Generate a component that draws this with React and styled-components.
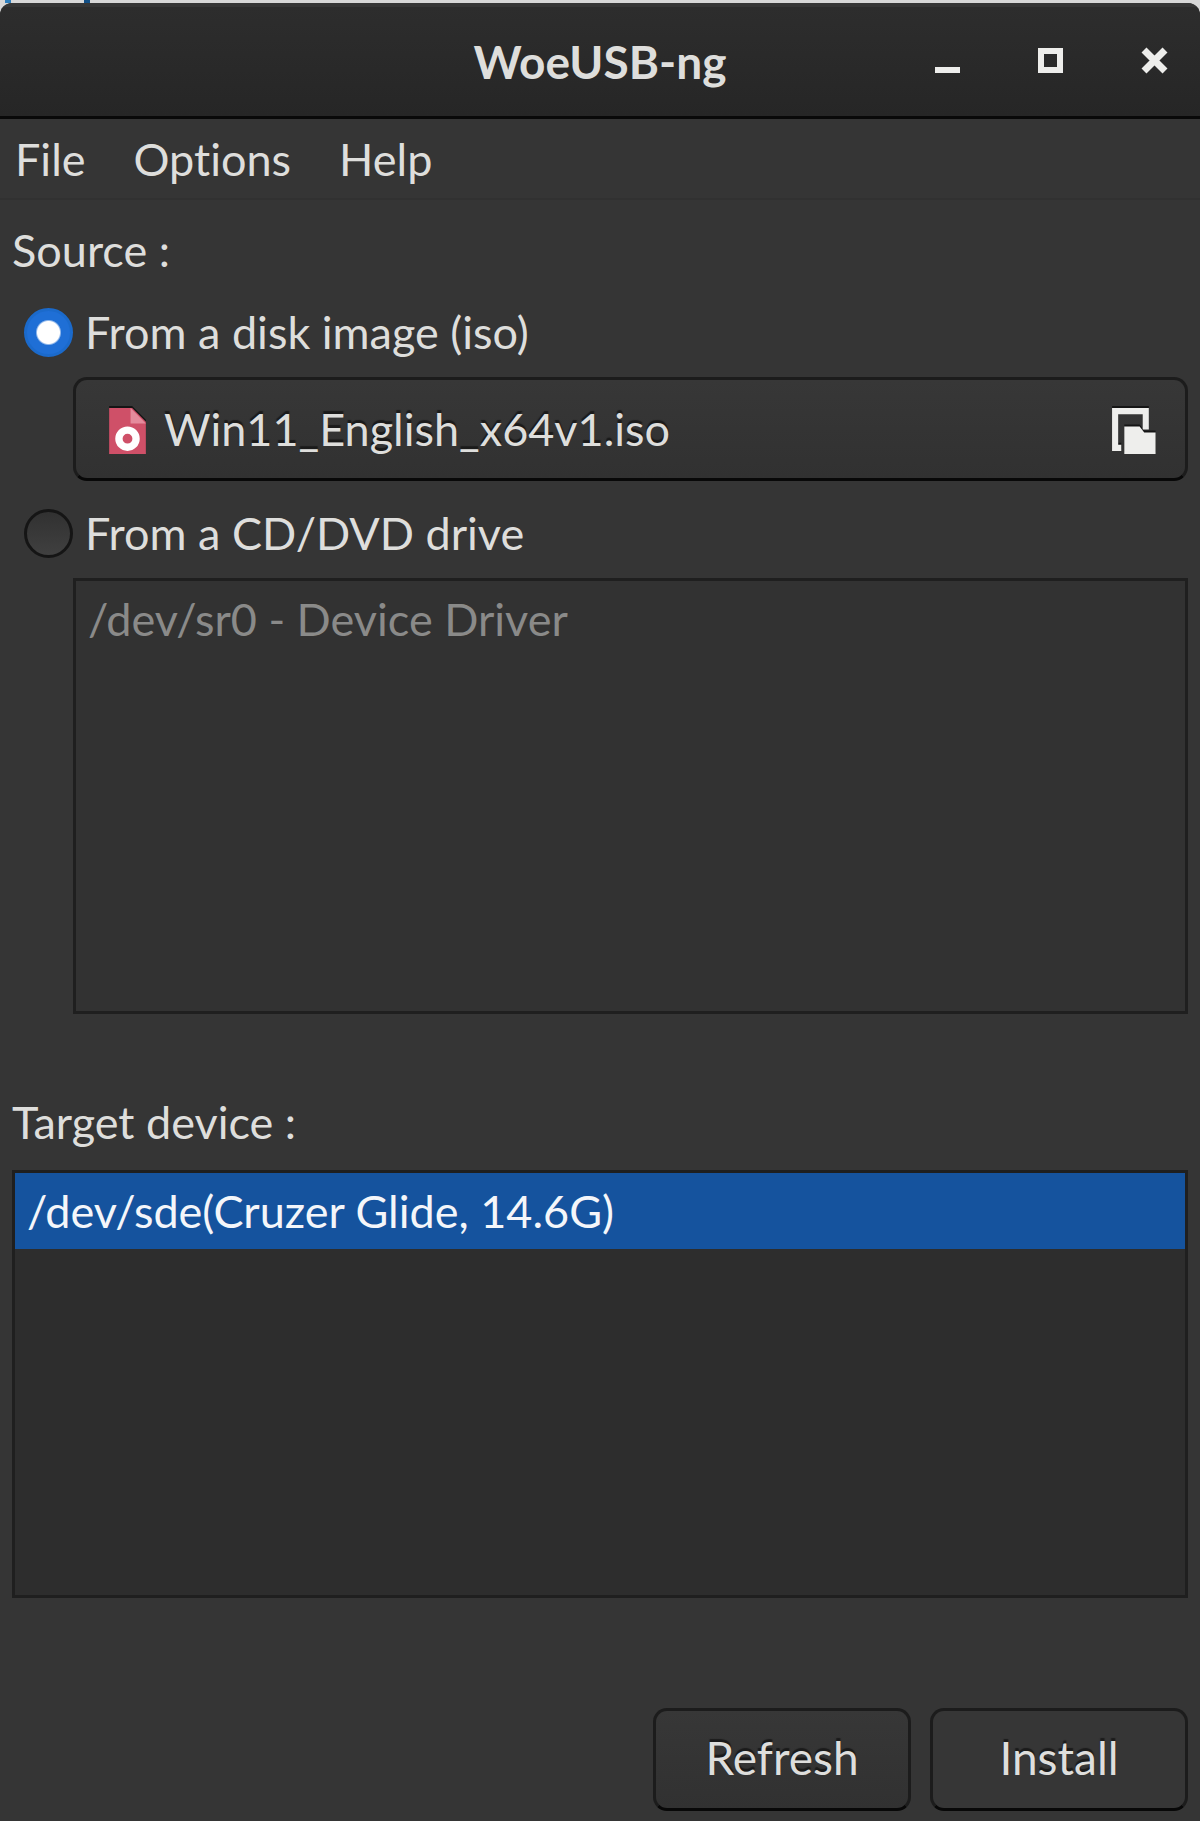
import React, { useState } from "react";
import styled, { createGlobalStyle } from "styled-components";

const GlobalStyle = createGlobalStyle`
  *, *::before, *::after {
    box-sizing: border-box;
  }

  body {
    margin: 0;
    background: #d8d8d8;
    color: #dededc;
    font-family: Lato, "Noto Sans", sans-serif;
    font-size: 45px;
    font-variant-ligatures: none;
    line-height: 56px;
  }

  button, input {
    font: inherit;
    color: inherit;
  }
`;

const Page = styled.div`
  display: flex;
  flex-direction: column;
  min-height: 100vh;
`;

const Desktop = styled.div`
  display: flex;
  gap: 73px;
  height: 3px;
  padding-left: 5px;
`;

const DesktopMark = styled.span`
  width: 6px;
  background: ${(props) => props.$color};
`;

const Window = styled.div`
  flex: 1;
  display: flex;
  flex-direction: column;
  background: #353535;
  border-radius: 12px 12px 0 0;
  overflow: hidden;
`;

const TitleBar = styled.header`
  display: grid;
  grid-template-columns: 1fr auto 1fr;
  align-items: center;
  height: 116px;
  border-top: 4px solid #363636;
  border-bottom: 3px solid #090909;
  background: linear-gradient(#2d2d2d, #262626);
`;

const Title = styled.h1`
  grid-column: 2;
  margin: 0;
  font-size: 46px;
  font-weight: 700;
`;

const WindowButtons = styled.div`
  display: flex;
  justify-content: flex-end;
  gap: 54px;
  padding-right: 21px;
`;

const WindowButton = styled.button`
  display: flex;
  padding: 0;
  border: 0;
  background: none;
  color: #ededeb;
`;

const MenuBar = styled.nav`
  display: flex;
  gap: 48px;
  padding: 12px 15px 11px;
  border-bottom: 2px solid #313131;
`;

const MenuItem = styled.button`
  padding: 0;
  border: 0;
  background: none;
  font-variant-ligatures: none;
`;

const Content = styled.main`
  flex: 1;
  display: flex;
  flex-direction: column;
  padding: 22px 12px 10px;
`;

const SectionLabel = styled.h2`
  margin: 0;
  font-size: 45px;
  font-weight: 400;
`;

const SourceGroup = styled.div`
  flex: 1 1 auto;
  display: flex;
  flex-direction: column;
  gap: 24px;
  margin: 26px 0 80px;
`;

const SourceOption = styled.div`
  flex: ${(props) => (props.$grow ? "1 1 auto" : "none")};
  display: flex;
  flex-direction: column;
  gap: 17px;
`;

const RadioLabel = styled.label`
  display: flex;
  align-items: center;
  gap: 12px;
  padding-left: 12px;
`;

const Radio = styled.input`
  appearance: none;
  width: 49px;
  height: 49px;
  margin: 0;
  border: 3px solid #151515;
  border-radius: 50%;
  background: linear-gradient(#313131, #404040);

  &:checked {
    border-color: #1b6acb;
    background: radial-gradient(circle, #fff 11px, #1f6fd6 13px);
  }
`;

const RaisedButton = styled.button`
  border: 3px solid #1c1c1c;
  border-bottom-color: #080808;
  border-radius: 14px;
  background: ${(props) =>
    props.$flat ? "#363636" : "linear-gradient(#373737, #313131)"};
  text-shadow: 0 -3px 1px rgba(0, 0, 0, 0.5);
`;

const FileButton = styled(RaisedButton)`
  display: flex;
  align-items: center;
  gap: 12px;
  height: 104px;
  margin-left: 61px;
  padding: 0 27px;
  text-align: left;
`;

const FileName = styled.span`
  flex: 1;
`;

const Icon = styled.svg`
  flex: none;
  width: 49px;
  height: 49px;
  filter: drop-shadow(0 -2px 0 rgba(0, 0, 0, 0.6));
`;

const DeviceList = styled.ul`
  flex: 1 1 auto;
  min-height: ${(props) => (props.$inset ? "434px" : "428px")};
  margin: ${(props) => (props.$inset ? "0 0 0 61px" : "20px 0 0")};
  padding: 0;
  border: 3px solid #1f1f1f;
  background: ${(props) => (props.$inset ? "#323232" : "#2d2d2d")};
  color: ${(props) => (props.$inset ? "#8a8a89" : "inherit")};
  list-style: none;
`;

const Device = styled.li`
  padding: 10px 12px;
  background: ${(props) => (props.$selected ? "#15539e" : "transparent")};
  color: ${(props) => (props.$selected ? "#f4f6fa" : "inherit")};
`;

const Actions = styled.footer`
  display: flex;
  justify-content: flex-end;
  gap: 19px;
  margin-top: 110px;
`;

const ActionButton = styled(RaisedButton)`
  width: 258px;
  height: 103px;
  padding: 0 0 4px;
  font-size: 46px;
`;

const DiskImageIcon = () => (
  <Icon viewBox="0 0 16 16" aria-hidden="true">
    <path d="M2 1h7.5L14 5.5V16H2z" fill="#cf5068" />
    <path d="M9 1v5h5z" fill="#e58b9c" />
    <circle cx="8" cy="11" r="2.8" fill="none" stroke="#fff" strokeWidth="2.4" />
  </Icon>
);

const OpenFileIcon = () => (
  <Icon viewBox="0 0 16 16" fill="#eeeeec" aria-hidden="true">
    <path d="M1 1h12v7h-2V3H3v10h1v2H1z" />
    <path d="M5 7h5l1.5 2H15.2v7H5z" />
  </Icon>
);

const windowControls = [
  { name: "Minimize", shape: <path d="M11 30h25v6H11z" fill="currentColor" /> },
  {
    name: "Maximize",
    shape: (
      <path
        d="M14 14h19v19H14z"
        fill="none"
        stroke="currentColor"
        strokeWidth="6"
      />
    ),
  },
  {
    name: "Close",
    shape: (
      <path
        d="M14 13l21 21M35 13L14 34"
        stroke="currentColor"
        strokeWidth="7"
      />
    ),
  },
];

const menus = ["File", "Options", "Help"];
const drives = ["/dev/sr0 - Device Driver"];
const targets = ["/dev/sde(Cruzer Glide, 14.6G)"];

const App = () => {
  const [source, setSource] = useState("iso");
  const [target, setTarget] = useState(targets[0]);

  return (
    <Page>
      <GlobalStyle />
      <Desktop>
        <DesktopMark $color="#2f7fbd" />
        <DesktopMark $color="#124f85" />
      </Desktop>
      <Window>
        <TitleBar>
          <Title>WoeUSB-ng</Title>
          <WindowButtons>
            {windowControls.map((control) => (
              <WindowButton key={control.name} aria-label={control.name}>
                <svg width="49" height="49" viewBox="0 0 49 49">
                  {control.shape}
                </svg>
              </WindowButton>
            ))}
          </WindowButtons>
        </TitleBar>
        <MenuBar>
          {menus.map((menu) => (
            <MenuItem key={menu}>{menu}</MenuItem>
          ))}
        </MenuBar>
        <Content>
          <SectionLabel>Source :</SectionLabel>
          <SourceGroup>
            <SourceOption>
              <RadioLabel>
                <Radio
                  type="radio"
                  name="source"
                  checked={source === "iso"}
                  onChange={() => setSource("iso")}
                />
                From a disk image (iso)
              </RadioLabel>
              <FileButton>
                <DiskImageIcon />
                <FileName>Win11_English_x64v1.iso</FileName>
                <OpenFileIcon />
              </FileButton>
            </SourceOption>
            <SourceOption $grow>
              <RadioLabel>
                <Radio
                  type="radio"
                  name="source"
                  checked={source === "drive"}
                  onChange={() => setSource("drive")}
                />
                From a CD/DVD drive
              </RadioLabel>
              <DeviceList $inset role="listbox" aria-label="CD/DVD drive">
                {drives.map((drive) => (
                  <Device key={drive} role="option" aria-disabled="true">
                    {drive}
                  </Device>
                ))}
              </DeviceList>
            </SourceOption>
          </SourceGroup>
          <SectionLabel id="target-label">Target device :</SectionLabel>
          <DeviceList role="listbox" aria-labelledby="target-label">
            {targets.map((device) => (
              <Device
                key={device}
                role="option"
                aria-selected={target === device}
                $selected={target === device}
                onClick={() => setTarget(device)}
              >
                {device}
              </Device>
            ))}
          </DeviceList>
          <Actions>
            <ActionButton>Refresh</ActionButton>
            <ActionButton $flat>Install</ActionButton>
          </Actions>
        </Content>
      </Window>
    </Page>
  );
};

export default App;
